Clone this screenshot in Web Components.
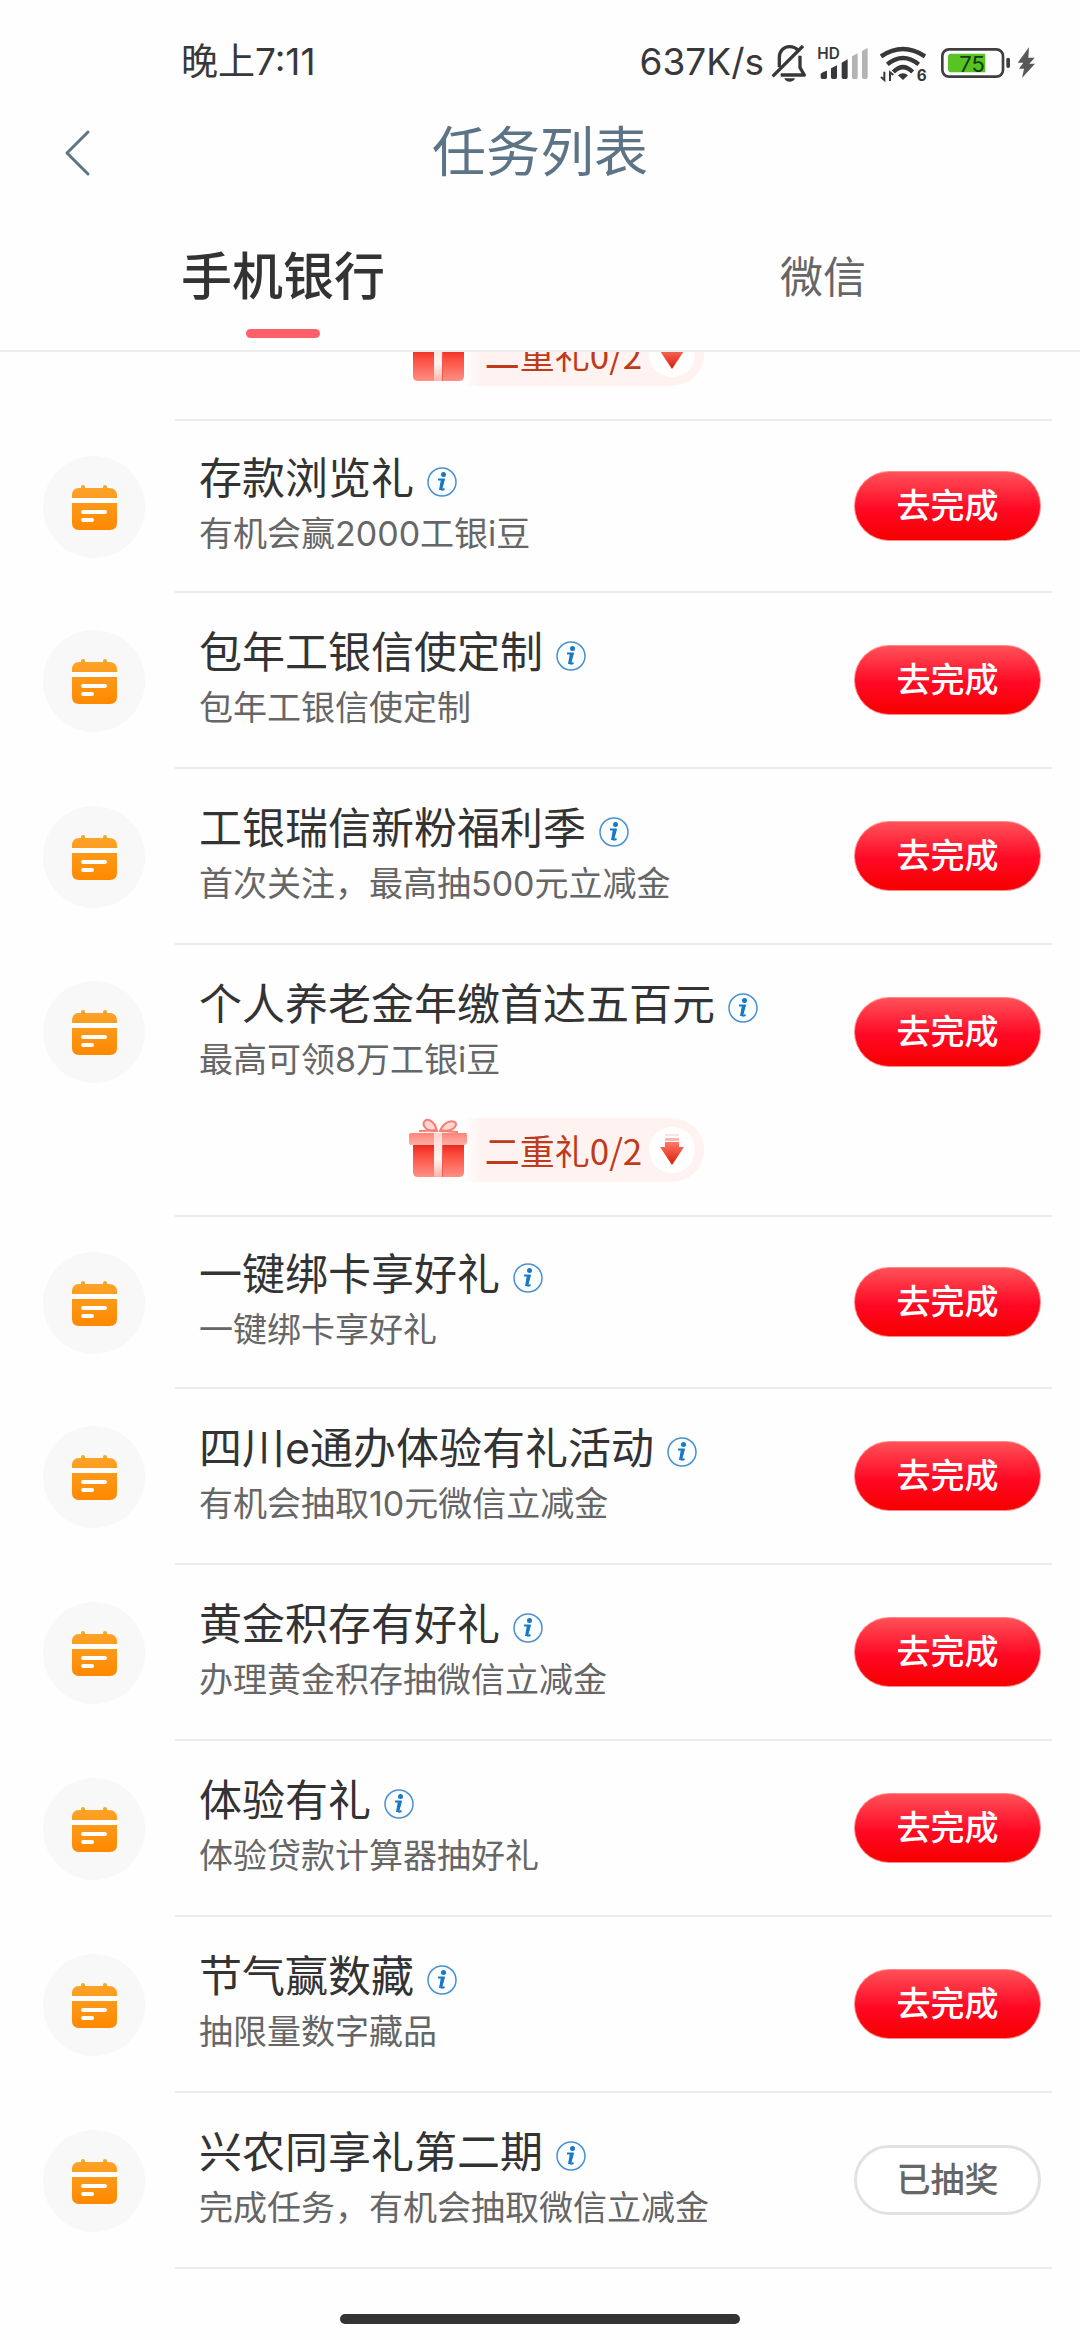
<!DOCTYPE html>
<html lang="zh-CN">
<head>
  <meta charset="utf-8" />
  <meta name="viewport" content="width=device-width, initial-scale=1" />
  <title>任务列表</title>
  <style>
    :root {
      --text: #333;
      --text-light: #666;
      --line: #ececec;
      --title: #5c7486;
      --accent: #ff6069;
    }
    body {
      margin: 0;
      background: #fefefe;
      color: var(--text);
      font-family: Inter, "Noto Sans CJK SC", sans-serif;
    }
  </style>
</head>
<body>
  <status-bar>
    <span>晚上7:11</span>
    <span slot="speed">637K/s</span>
  </status-bar>
  <page-header>任务列表</page-header>
  <channel-tabs>
    <channel-tab selected>手机银行</channel-tab>
    <channel-tab>微信</channel-tab>
  </channel-tabs>
  <task-list>
    <gift-bar>二重礼0/2</gift-bar>
    <task-group>
      <task-item>存款浏览礼<span slot="desc">有机会赢2000工银i豆</span></task-item>
      <task-item>包年工银信使定制<span slot="desc">包年工银信使定制</span></task-item>
      <task-item>工银瑞信新粉福利季<span slot="desc">首次关注，最高抽500元立减金</span></task-item>
      <task-item last>个人养老金年缴首达五百元<span slot="desc">最高可领8万工银i豆</span></task-item>
    </task-group>
    <gift-bar>二重礼0/2</gift-bar>
    <task-group>
      <task-item>一键绑卡享好礼<span slot="desc">一键绑卡享好礼</span></task-item>
      <task-item>四川e通办体验有礼活动<span slot="desc">有机会抽取10元微信立减金</span></task-item>
      <task-item>黄金积存有好礼<span slot="desc">办理黄金积存抽微信立减金</span></task-item>
      <task-item>体验有礼<span slot="desc">体验贷款计算器抽好礼</span></task-item>
      <task-item>节气赢数藏<span slot="desc">抽限量数字藏品</span></task-item>
      <task-item done>兴农同享礼第二期<span slot="desc">完成任务，有机会抽取微信立减金</span></task-item>
    </task-group>
  </task-list>
  <home-indicator></home-indicator>

  <script>
    (function() {
      // registers an element whose shadow root is a clone of the given markup
      function define(name, html, setup) {
        const template = document.createElement("template");
        template.innerHTML = html;
        class Element extends HTMLElement {
          constructor() {
            super();
            this._shadowRoot = this.attachShadow({ mode: "open" });
            this._shadowRoot.appendChild(template.content.cloneNode(true));
          }
          connectedCallback() {
            if (setup) setup(this, this._shadowRoot);
          }
        }
        window.customElements.define(name, Element);
      }

      define("status-bar", `
        <style>
          :host {
            display: flex;
            align-items: center;
            justify-content: space-between;
            padding: 34px 45px 12px 181px;
            font-size: 37px;
            line-height: 56px;
            color: #38383a;
          }
          .right {
            display: flex;
            align-items: center;
          }
          svg {
            height: 40px;
            margin-left: 12px;
            overflow: visible;
          }
          .bell {
            margin-left: 8px;
          }
          .battery {
            margin-left: 15px;
          }
          .bolt {
            margin-left: 7px;
          }
        </style>
        <slot></slot>
        <div class="right">
          <slot name="speed"></slot>
          <svg class="bell" width="34" viewBox="450 63 102 120" fill="none" stroke="currentColor" stroke-width="10">
            <path d="M472 139V110C472 90 485 77 503 77c12 0 20 5 26 12M534 104v36l13 22H476" stroke-linejoin="round"/>
            <path d="M452 166 543 75"/>
            <path d="M487 172h32c-3 14-29 14-32 0z" fill="currentColor" stroke="none"/>
          </svg>
          <svg width="50" viewBox="588 63 150 120" fill="currentColor">
            <text x="586" y="113" font-size="46" font-weight="600">HD</text>
            <path d="M596 158q9-7 19-9v20q0 5-5 5h-9q-5 0-5-5zM627 142l18-9v36q0 5-5 5h-8q-5 0-5-5zM659 125l18-10v54q0 5-5 5h-8q-5 0-5-5z"/>
            <path fill="#b3b3b3" d="M690 106l17-9v72q0 5-5 5h-7q-5 0-5-5zM720 90l17-9v88q0 5-5 5h-7q-5 0-5-5z"/>
          </svg>
          <svg width="46" viewBox="777 63 138 120" fill="none" stroke="currentColor" stroke-width="13">
            <path d="M780 106q66-44 132 0M799 130q47-38 94 0M817 153q29-29 58 0"/>
            <path d="M831 163q15-13 30 0l-15 14z" fill="currentColor" stroke="none"/>
            <path d="M780 168l10 9V152M817 162l-10-8v26" stroke-width="6"/>
            <text x="887" y="179" font-size="46" font-weight="700" fill="currentColor" stroke="none">6</text>
          </svg>
          <svg class="battery" width="69" viewBox="960 63 207 120">
            <rect x="964" y="85" width="182" height="82" rx="20" fill="none" stroke="#3f3f41" stroke-width="8"/>
            <path d="M990 98h103v56H990q-9 0-9-9v-38q0-9 9-9z" fill="#58c322"/>
            <rect x="1156" y="110" width="11" height="31" rx="5" fill="#3f3f41"/>
            <text x="1015" y="152" font-size="66" fill="#123c15">75</text>
          </svg>
          <svg class="bolt" width="18" viewBox="1188 63 54 120" fill="#58585a">
            <path d="M1224 79l-34 46h17l-13 18h15l-6 28 39-43h-17l16-18h-19z"/>
          </svg>
        </div>
      `);

      define("page-header", `
        <style>
          :host {
            display: grid;
            grid-template-columns: 1fr auto 1fr;
            align-items: center;
            height: 102px;
            color: var(--title);
          }
          button {
            justify-self: start;
            display: flex;
            margin-left: 64px;
            padding: 0;
            border: 0;
            background: none;
            color: inherit;
          }
          h1 {
            margin: 0;
            font-size: 54px;
            font-weight: 400;
            line-height: 80px;
          }
        </style>
        <button type="button" aria-label="返回">
          <svg width="28" height="48" viewBox="0 0 28 48" fill="none" stroke="currentColor" stroke-width="3" stroke-linecap="round" stroke-linejoin="round">
            <path d="M24 3 3 24l21 21"/>
          </svg>
        </button>
        <h1><slot></slot></h1>
      `);

      define("channel-tabs", `
        <style>
          :host {
            display: flex;
            padding-top: 41px;
            border-bottom: 2px solid var(--line);
          }
        </style>
        <slot></slot>
      `, function(host) {
        host.setAttribute("role", "tablist");
      });

      define("channel-tab", `
        <style>
          :host {
            flex: 1;
          }
          button {
            display: flex;
            flex-direction: column;
            align-items: center;
            gap: 20px;
            box-sizing: border-box;
            width: 100%;
            padding: 0 0 12px 26px;
            border: 0;
            background: none;
            color: var(--text-light);
            font: inherit;
            font-size: 43px;
            line-height: 64px;
          }
          button::after {
            content: "";
            width: 74px;
            height: 9px;
            border-radius: 5px;
          }
          :host([selected]) button {
            color: var(--text);
            font-size: 51px;
            font-weight: 500;
          }
          :host([selected]) button::after {
            background: var(--accent);
          }
        </style>
        <button type="button" role="tab"><slot></slot></button>
      `, function(host, root) {
        root.querySelector("button").setAttribute("aria-selected", host.hasAttribute("selected"));
      });

      // the list is scrolled a little, so the first gift bar is cut by the tabs
      define("task-list", `
        <style>
          :host {
            display: block;
            overflow: hidden;
          }
          .content {
            margin-top: -30px;
          }
        </style>
        <div class="content"><slot></slot></div>
      `);

      define("task-group", `
        <style>
          :host {
            display: block;
          }
        </style>
        <slot></slot>
      `);

      define("gift-bar", `
        <style>
          :host {
            display: block;
          }
          .bar {
            display: flex;
            justify-content: center;
            padding-bottom: 33px;
          }
          .chip {
            display: flex;
            align-items: center;
            height: 64px;
            margin-right: -32px;
            padding-right: 9px;
            border-radius: 0 32px 32px 0;
            background: linear-gradient(90deg, transparent 56px, #fff3f2 72px);
            color: #bf3a1a;
            font-family: "Noto Sans CJK SC", sans-serif;
            font-size: 35px;
            line-height: 64px;
          }
          .gift {
            margin-right: 17px;
          }
          .arrow {
            margin-left: 7px;
          }
          .line {
            height: 2px;
            margin: 0 28px 0 175px;
            background: var(--line);
          }
        </style>
        <div class="bar">
          <div class="chip">
            <svg class="gift" width="60" height="64" viewBox="0 0 60 64">
              <defs>
                <linearGradient id="box" x1="0" y1="0" x2="0" y2="1">
                  <stop offset="0" stop-color="#e8261b"/>
                  <stop offset="0.3" stop-color="#fb4a3c"/>
                  <stop offset="1" stop-color="#ff8f84"/>
                </linearGradient>
                <linearGradient id="lid" x1="0" y1="0" x2="0" y2="1">
                  <stop offset="0" stop-color="#ff8478"/>
                  <stop offset="1" stop-color="#ffb0a6"/>
                </linearGradient>
                <linearGradient id="band" x1="0" y1="0" x2="0" y2="1">
                  <stop offset="0" stop-color="#ffd5d0"/>
                  <stop offset="0.6" stop-color="#fff4f2"/>
                  <stop offset="1" stop-color="#ffb3aa"/>
                </linearGradient>
              </defs>
              <path d="M5 26h51v28q0 5-5 5H10q-5 0-5-5z" fill="url(#box)"/>
              <path d="M3 15h55q1 0 1 2v7q0 2-2 3H3q-2 0-2-2v-8q0-2 2-2z" fill="url(#lid)"/>
              <path d="M26 15h8v44h-8z" fill="url(#band)"/>
              <path d="M34 27h1v32h-1z" fill="#ee5a4d"/>
              <g fill="#ffd6d1" stroke="#f47f74" stroke-width="2">
                <path d="M29 13C20 14 14 9 16 4c2-4 10-3 13 9z"/>
                <path d="M32 13c8 1 16-2 16-7 0-4-11-5-16 7z"/>
                <path d="M28 12q-8 1-17 1M32 12q8 2 18 2" fill="none"/>
              </g>
            </svg>
            <slot></slot>
            <svg class="arrow" width="46" height="46" viewBox="0 0 46 46">
              <defs>
                <linearGradient id="down" x1="0" y1="0" x2="0" y2="1">
                  <stop offset="0" stop-color="#ff7a6a"/>
                  <stop offset="1" stop-color="#d91c08"/>
                </linearGradient>
              </defs>
              <circle cx="23" cy="23" r="23" fill="#fff"/>
              <path d="M16 7h14v2H16z" fill="#fde3e0"/>
              <path d="M16 11h14v3H16z" fill="#fbb9b2"/>
              <path d="M16 15h14v5h5L23 38 11 20h5z" fill="url(#down)"/>
            </svg>
          </div>
        </div>
        <div class="line"></div>
      `);

      define("task-item", `
        <style>
          :host {
            display: grid;
            grid-template-columns: 132px 1fr;
            padding: 0 28px 0 43px;
          }
          .icon {
            align-self: center;
            width: 102px;
            height: 102px;
          }
          .row {
            display: flex;
            align-items: center;
            gap: 12px;
            padding: 31px 11px 31px 24px;
            border-bottom: 2px solid var(--line);
          }
          :host(:first-child) .row {
            padding-top: 29px;
            padding-bottom: 29px;
          }
          :host([last]) .row {
            padding-bottom: 30px;
            border-bottom: 0;
          }
          .text {
            flex: 1;
            min-width: 0;
          }
          h2, p {
            margin: 0;
            font-weight: 400;
            line-height: 56px;
          }
          h2 {
            height: 56px;
            font-size: 43px;
          }
          p {
            color: var(--text-light);
            font-size: 34px;
          }
          .info {
            width: 32px;
            height: 32px;
            margin-left: 12px;
            padding: 0;
            border: 0;
            background: none;
            line-height: 0;
            vertical-align: middle;
          }
          .action {
            box-sizing: border-box;
            width: 187px;
            height: 70px;
            padding: 0;
            border: 1px solid #ff8a8a;
            border-radius: 35px;
            background: linear-gradient(#ff5158, #ff0824 55%, #f60000);
            color: #fff;
            font: inherit;
            font-size: 34px;
            font-weight: 500;
            line-height: 64px;
          }
          :host([done]) .action {
            border: 3px solid #e2e2e2;
            background: #fff;
            color: var(--text-light);
          }
        </style>
        <svg class="icon" viewBox="0 0 102 102">
          <defs>
            <linearGradient id="cal" x1="0" y1="0" x2="0" y2="1">
              <stop offset="0" stop-color="#fba52c"/>
              <stop offset="1" stop-color="#ff8800"/>
            </linearGradient>
          </defs>
          <circle cx="51" cy="51" r="51" fill="#f8f8f8"/>
          <path d="M38 32v-1q0-2 2-2t2 2v1h18v-1q0-2 2-2t2 2v1h2q8 0 8 8v27q0 7-7 7H36q-7 0-7-7V40q0-8 7-8z" fill="url(#cal)"/>
          <path d="M28 42h47v5H28z" fill="#fff"/>
          <path d="M40 56h22M40 64h9" stroke="#fff" stroke-width="4" stroke-linecap="round"/>
        </svg>
        <div class="row">
          <div class="text">
            <h2><slot></slot><button class="info" type="button" aria-label="说明"><svg width="32" height="32" viewBox="0 0 32 32">
              <circle cx="16" cy="16" r="14" fill="#fbfeff" stroke="#4a90d0" stroke-width="1.5"/>
              <circle cx="17.5" cy="8.5" r="2.5" fill="#1878c8"/>
              <path d="M12 13.5h5.500l-2.500 9q-.5 2 3.500.5" fill="none" stroke="#1878c8" stroke-width="2"/>
              <path d="M15 13h4l-3 11h-3z" fill="#1878c8"/>
            </svg></button></h2>
            <p><slot name="desc"></slot></p>
          </div>
          <button class="action" type="button"></button>
        </div>
      `, function(host, root) {
        root.querySelector(".action").textContent = host.hasAttribute("done") ? "已抽奖" : "去完成";
      });

      define("home-indicator", `
        <style>
          :host {
            display: block;
            width: 37%;
            height: 10px;
            margin: 45px auto 17px;
            border-radius: 5px;
            background: #333;
          }
        </style>
      `);
    })();
  </script>
</body>
</html>
